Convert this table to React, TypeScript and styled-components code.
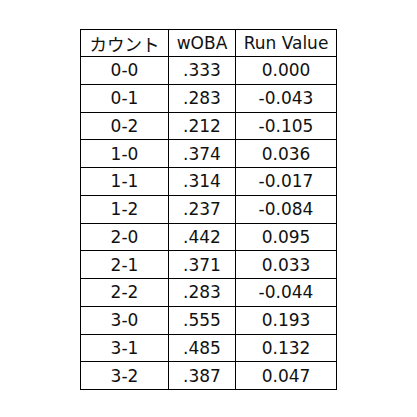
import React from 'react'
import styled, { createGlobalStyle } from 'styled-components'

const GlobalStyle = createGlobalStyle`
  html, body {
    margin: 0;
    padding: 0;
    background: #fff;
  }
`

const Page = styled.div`
  padding: 29px 0 0 80px;
  font-family: 'DejaVu Sans', 'Noto Sans CJK JP', sans-serif;
  color: #111;
`

const Table = styled.table`
  border-collapse: collapse;
  table-layout: fixed;
  width: 257px;
  font-size: 17px;

  th,
  td {
    border: 1px solid #000;
    padding: 0;
    text-align: center;
    font-weight: normal;
    white-space: nowrap;
  }

  th {
    height: 26px;
  }

  td {
    height: 26.75px;
  }

  th:nth-child(1) {
    width: 87px;
  }

  th:nth-child(2) {
    width: 66px;
  }
`

const Kana = styled.span`
  font-family: 'Noto Sans CJK JP', sans-serif;
  font-size: 17.5px;
`

const rows: [string, string, string][] = [
  ['0-0', '.333', '0.000'],
  ['0-1', '.283', '-0.043'],
  ['0-2', '.212', '-0.105'],
  ['1-0', '.374', '0.036'],
  ['1-1', '.314', '-0.017'],
  ['1-2', '.237', '-0.084'],
  ['2-0', '.442', '0.095'],
  ['2-1', '.371', '0.033'],
  ['2-2', '.283', '-0.044'],
  ['3-0', '.555', '0.193'],
  ['3-1', '.485', '0.132'],
  ['3-2', '.387', '0.047'],
]

export default function App() {
  return (
    <Page>
      <GlobalStyle />
      <Table>
        <thead>
          <tr>
            <th>
              <Kana>カウント</Kana>
            </th>
            <th>wOBA</th>
            <th>Run Value</th>
          </tr>
        </thead>
        <tbody>
          {rows.map(([count, woba, rv]) => (
            <tr key={count}>
              <td>{count}</td>
              <td>{woba}</td>
              <td>{rv}</td>
            </tr>
          ))}
        </tbody>
      </Table>
    </Page>
  )
}
